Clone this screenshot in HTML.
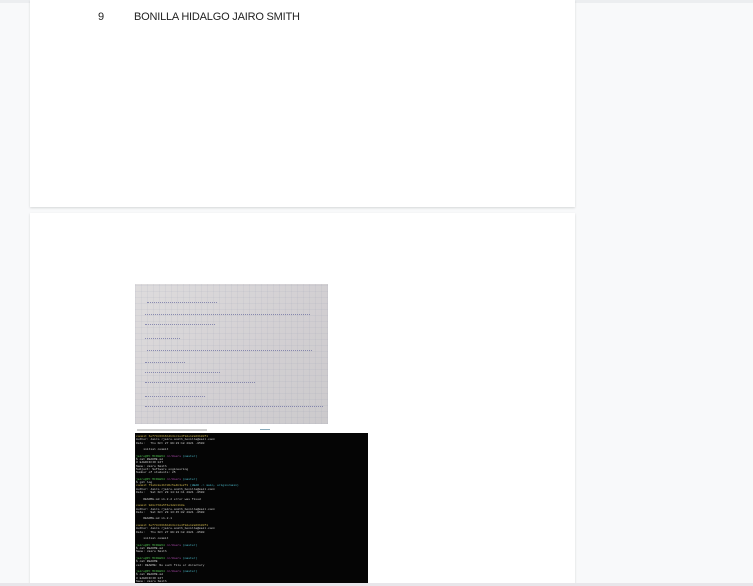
<!DOCTYPE html><html style="overflow:hidden;height:586px"><head><style>
body{margin:0;width:753px;height:586px;background:#f8f9fa;position:relative;overflow:hidden;font-family:"Liberation Sans",sans-serif}
.topb{position:absolute;left:0;top:0;width:753px;height:3px;background:#eceef0}
.pg{position:absolute;left:30px;width:545px;background:#fff;box-shadow:0 1px 2px rgba(60,64,67,.18)}
.t{position:absolute;font-size:11px;color:#222;top:11px;letter-spacing:-.2px}
.photo{position:absolute;left:135px;top:284px;width:193px;height:140px;overflow:hidden;background:
repeating-linear-gradient(0deg,rgba(120,130,160,.08) 0 1px,transparent 1px 6px),repeating-linear-gradient(90deg,rgba(120,130,160,.08) 0 1px,transparent 1px 6px),linear-gradient(135deg,#dedcdd,#d2cfd2 60%,#cccacc)}
.hw{position:absolute;height:1px;border-top:1px dotted #4b4f90;opacity:.55}
.term{position:absolute;left:135px;top:433px;width:233px;height:150px;background:#050505;font-family:"Liberation Mono",monospace;font-size:3px;line-height:3.3px;color:#ccc;padding:2px 1px;box-sizing:border-box;white-space:pre;overflow:hidden}
.y{color:#c8b14a}.g{color:#4fbf4f}.c{color:#49b8c8}.m{color:#b54fb5}
.bot{position:absolute;left:0;top:583px;width:753px;height:3px;background:#e8e6ea}
</style></head><body>
<div class="topb"></div>
<div class="pg" style="top:0;height:207px">
<div class="t" style="left:68px">9</div>
<div class="t" style="left:104px">BONILLA HIDALGO JAIRO SMITH</div>
</div>
<div class="pg" style="top:213px;height:373px"></div>
<div class="photo">
<div class="hw" style="left:12px;top:18px;width:70px"></div>
<div class="hw" style="left:10px;top:30px;width:165px"></div>
<div class="hw" style="left:10px;top:40px;width:70px"></div>
<div class="hw" style="left:10px;top:54px;width:35px"></div>
<div class="hw" style="left:12px;top:66px;width:165px"></div>
<div class="hw" style="left:10px;top:78px;width:40px"></div>
<div class="hw" style="left:10px;top:88px;width:75px"></div>
<div class="hw" style="left:10px;top:98px;width:110px"></div>
<div class="hw" style="left:10px;top:112px;width:60px"></div>
<div class="hw" style="left:10px;top:122px;width:178px"></div>
</div>
<div style="position:absolute;left:135px;top:428px;width:233px;height:5px;background:#fff"><div style="position:absolute;left:2px;top:1px;width:70px;height:2px;background:#ccc"></div><div style="position:absolute;left:125px;top:1px;width:10px;height:1px;background:#8ab"></div></div>
<div class="term"><span class="y">commit 6ef73c66b6b4b3cc1e4f8de12a66b00f1</span>
Author: Jairo &lt;jairo.smith_bonilla@mail.com&gt;
Date:   Thu Oct 27 09:23:18 2021 -0500

    initial commit

<span class="g">jairo@PC MINGW64</span> <span class="m">/c/Users</span> <span class="c">(master)</span>
$ cat README.md
# EJERCICIO GIT
Name: Jairo Smith
Subject: Software engineering
Number of students: 25

<span class="g">jairo@PC MINGW64</span> <span class="m">/c/Users</span> <span class="c">(master)</span>
$ git log
<span class="y">commit f3a9c8e4b7d6c5a4b3e2f1</span> <span class="c">(HEAD -&gt; main, origin/main)</span>
Author: Jairo &lt;jairo.smith_bonilla@mail.com&gt;
Date:   Sat Oct 29 14:12:11 2021 -0500

    README.md v1.2.2 error was fixed

<span class="y">commit 9d8c7b6a5f4e3d2c1b0a</span>
Author: Jairo &lt;jairo.smith_bonilla@mail.com&gt;
Date:   Sat Oct 29 13:45:02 2021 -0500

    README.md v1.2.1

<span class="y">commit 6ef73c66b6b4b3cc1e4f8de12a66b00f1</span>
Author: Jairo &lt;jairo.smith_bonilla@mail.com&gt;
Date:   Thu Oct 27 09:23:18 2021 -0500

    initial commit

<span class="g">jairo@PC MINGW64</span> <span class="m">/c/Users</span> <span class="c">(master)</span>
$ cat README.md
Name: Jairo Smith

<span class="g">jairo@PC MINGW64</span> <span class="m">/c/Users</span> <span class="c">(master)</span>
$ cat README
cat: README: No such file or directory

<span class="g">jairo@PC MINGW64</span> <span class="m">/c/Users</span> <span class="c">(master)</span>
$ cat README.md
# EJERCICIO GIT
Name: Jairo Smith
Subject: Software engineering
Number of students: 25</div>
<div class="bot"></div>
</body></html>
